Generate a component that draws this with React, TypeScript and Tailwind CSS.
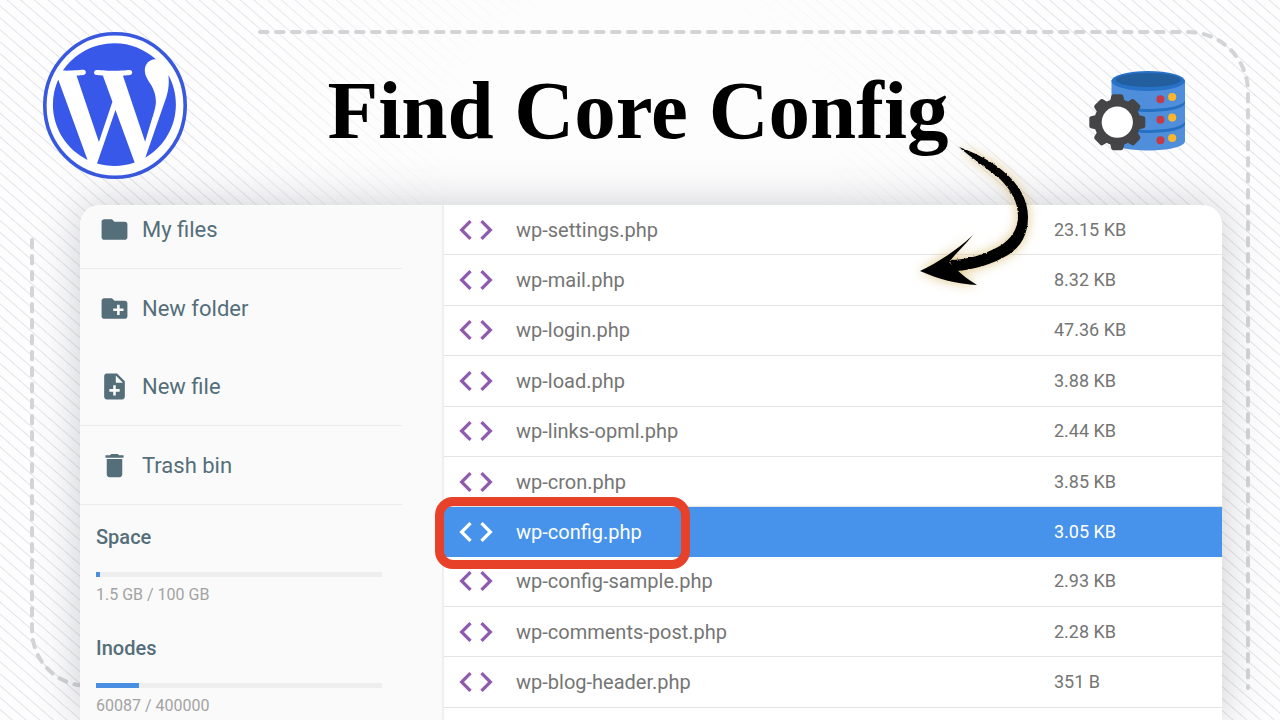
import type { IconType } from "react-icons";
import { MdCode, MdCreateNewFolder, MdDelete, MdFolder, MdNoteAdd } from "react-icons/md";

type FileEntry = { name: string; size: string; selected?: boolean };

const files: FileEntry[] = [
  { name: "wp-settings.php", size: "23.15 KB" },
  { name: "wp-mail.php", size: "8.32 KB" },
  { name: "wp-login.php", size: "47.36 KB" },
  { name: "wp-load.php", size: "3.88 KB" },
  { name: "wp-links-opml.php", size: "2.44 KB" },
  { name: "wp-cron.php", size: "3.85 KB" },
  { name: "wp-config.php", size: "3.05 KB", selected: true },
  { name: "wp-config-sample.php", size: "2.93 KB" },
  { name: "wp-comments-post.php", size: "2.28 KB" },
  { name: "wp-blog-header.php", size: "351 B" },
];

function WordPressLogo() {
  return (
    <svg viewBox="0 0 144 147" className="h-[147px] w-36 shrink-0" role="img" aria-label="WordPress">
      <ellipse cx="72" cy="73.5" rx="70.2" ry="71.7" fill="#fff" stroke="#3858e0" strokeWidth="3.6" />
      <g transform="translate(3 4.2) scale(5.7)" fill="#3858e9">
        <path d="M21.469 6.825c.84 1.537 1.318 3.3 1.318 5.175 0 3.979-2.156 7.456-5.363 9.325l3.295-9.527c.615-1.54.82-2.771.82-3.864 0-.405-.026-.78-.07-1.11m-7.981.105c.647-.03 1.232-.105 1.232-.105.582-.075.514-.93-.067-.899 0 0-1.755.135-2.88.135-1.064 0-2.85-.15-2.85-.15-.585-.03-.661.855-.075.885 0 0 .54.061 1.125.09l1.68 4.605-2.37 7.08L5.354 6.9c.649-.03 1.234-.1 1.234-.1.585-.075.516-.93-.065-.896 0 0-1.746.138-2.874.138-.2 0-.438-.008-.69-.015C4.911 3.15 8.235 1.215 12 1.215c2.809 0 5.365 1.072 7.286 2.833-.046-.003-.091-.009-.141-.009-1.06 0-1.812.923-1.812 1.914 0 .89.513 1.643 1.06 2.531.411.72.89 1.643.89 2.977 0 .915-.354 1.994-.821 3.479l-1.075 3.585-3.9-11.61.001.014zM12 22.784c-1.059 0-2.081-.153-3.048-.437l3.237-9.406 3.315 9.087c.024.053.05.101.078.149-1.12.393-2.325.609-3.582.609M1.211 12c0-1.564.336-3.05.935-4.39L7.29 21.709C3.694 19.96 1.212 16.271 1.211 12" />
      </g>
    </svg>
  );
}

function DatabaseIcon() {
  return (
    <svg viewBox="0 0 97 81" className="h-[81px] w-[97px] shrink-0" role="img" aria-label="Database settings">
      <path d="M22.5 10v61c0 5.500 16 9.500 36.700 9.500S96 76.500 96 71V10z" fill="#4f8edb" />
      <path d="M22.500 30c0 5 16 9 36.700 9S96 35 96 30v3c0 5-16 9-36.800 9s-36.700-4-36.700-9zM22.500 51c0 5 16 9 36.700 9S96 56 96 51v3c0 5-16 9-36.800 9s-36.700-4-36.700-9z" fill="#2670c4" />
      <ellipse cx="59.200" cy="11" rx="36.800" ry="10" fill="#2771c6" />
      <ellipse cx="59.200" cy="10" rx="32.500" ry="7" fill="#235f9f" />
      <g fill="#c53948">
        <circle cx="71.400" cy="29.200" r="4" />
        <circle cx="71.400" cy="49.800" r="4" />
        <circle cx="71.400" cy="70.200" r="4" />
      </g>
      <g fill="#fbb62c">
        <circle cx="83.200" cy="27" r="4.100" />
        <circle cx="83.200" cy="47.600" r="4.100" />
        <circle cx="83.200" cy="68" r="4.100" />
      </g>
      <g transform="translate(28.300 52.200)" fill="#454547">
        <circle r="23.200" />
        {[0, 45, 90, 135, 180, 225, 270, 315].map((angle) => (
          <path key={angle} transform={`rotate(${angle})`} d="M-7.500 -20L-6 -26.300Q-5.500 -28 -3.800 -28H3.800Q5.500 -28 6 -26.300L7.500 -20Z" />
        ))}
        <circle r="15.600" fill="#fff" />
      </g>
    </svg>
  );
}

function DashedFrame() {
  return (
    <svg
      viewBox="0 0 1280 720"
      className="pointer-events-none absolute inset-0 h-full w-full"
      fill="none"
      stroke="#d3d4d6"
      strokeWidth="4"
      strokeLinecap="round"
      strokeDasharray="7.500 8.500"
      aria-hidden="true"
    >
      <path d="M260 32H1188A60 60 0 0 1 1248 92V688" />
      <path d="M32 240V630A56 56 0 0 0 88 686" />
    </svg>
  );
}

function HandArrow() {
  return (
    <svg viewBox="900 130 150 170" className="pointer-events-none absolute top-[130px] left-[900px] h-[170px] w-[150px]" aria-hidden="true">
      <defs>
        <filter id="rough" x="-20%" y="-20%" width="140%" height="140%">
          <feTurbulence type="fractalNoise" baseFrequency="0.35" numOctaves="2" seed="4" result="noise" />
          <feDisplacementMap in="SourceGraphic" in2="noise" scale="2.5" xChannelSelector="R" yChannelSelector="G" />
        </filter>
      </defs>
      <g className="drop-shadow-[0_0_6px_rgba(214,180,100,0.8)]">
        <path
          filter="url(#rough)"
          d="M959 147C975 153 990 160 1003 171C1019 184 1028 200 1028 217C1028 234 1021 247 1008 255C992 264 975 270 955 271L949 260C968 260 985 254 998 247C1011 240 1018 229 1018 216C1018 202 1011 190 1000 179C988 169 973 159 959 147Z"
        />
        <path d="M920 271C939 262 957 250 973 235C966 244 956 253 949 262L956 269C962 275 969 280 977 285C957 284 938 279 920 271Z" />
      </g>
    </svg>
  );
}

function NavItem({ icon: Icon, label }: { icon: IconType; label: string }) {
  return (
    <li>
      <a href="#" className="flex h-[78px] items-center gap-3 pl-[19px]">
        <Icon size={31} />
        <span>{label}</span>
      </a>
    </li>
  );
}

function Usage({ title, percent, detail }: { title: string; percent: number; detail: string }) {
  return (
    <section className="pr-[60px] pl-4">
      <h2 className="text-xl leading-6 font-medium text-[#546e7a]">{title}</h2>
      <div className="mt-[23px] h-[5px] bg-[#eeeeee]">
        <div className="h-full bg-[#4a90e2]" style={{ width: `${percent}%` }} />
      </div>
      <p className="mt-2 text-base leading-5 text-[#a3a3a3]">{detail}</p>
    </section>
  );
}

function Sidebar() {
  return (
    <aside className="w-[364px] shrink-0 border-r-2 border-[#efefef] bg-[#fafafa]">
      <nav className="mr-10 text-[22px] text-[#546e7a]">
        <ul className="-mt-[15px] border-b border-[#ececec]">
          <NavItem icon={MdFolder} label="My files" />
        </ul>
        <ul className="border-b border-[#ececec]">
          <NavItem icon={MdCreateNewFolder} label="New folder" />
          <NavItem icon={MdNoteAdd} label="New file" />
        </ul>
        <ul className="border-b border-[#ececec]">
          <NavItem icon={MdDelete} label="Trash bin" />
        </ul>
      </nav>
      <div className="flex flex-col gap-[31px] pt-5">
        <Usage title="Space" percent={1.5} detail="1.5 GB / 100 GB" />
        <Usage title="Inodes" percent={15} detail="60087 / 400000" />
      </div>
    </aside>
  );
}

function FileTable() {
  return (
    <div className="min-w-0 flex-1 bg-white">
      <table className="h-[503px] w-full table-fixed border-collapse">
        <tbody>
          {files.map((file) => (
            <tr
              key={file.name}
              className={
                file.selected
                  ? "bg-[#4793eb] text-white"
                  : "border-b border-[#e4e4e4] text-[#757575]"
              }
            >
              <th scope="row" className="relative p-0 pl-3 text-left text-xl font-normal">
                <span className="flex items-center gap-5">
                  <MdCode size={40} className={file.selected ? "text-white" : "text-[#8e5bb0]"} />
                  {file.name}
                </span>
                {file.selected && (
                  <span className="absolute -top-[10px] -left-[9px] z-10 h-[72px] w-[255px] rounded-[18px] border-[9px] border-[#e8412a]" />
                )}
              </th>
              <td className="w-[168px] p-0 text-lg">{file.size}</td>
            </tr>
          ))}
        </tbody>
      </table>
    </div>
  );
}

export default function App() {
  return (
    <main className="relative flex h-screen flex-col overflow-hidden bg-[repeating-linear-gradient(41deg,#fdfdfe_0px,#fdfdfe_7px,#e3e4ea_8px,#fdfdfe_9px)] font-[Roboto,sans-serif]">
      <div className="absolute inset-0 bg-[radial-gradient(ellipse_at_50%_22%,#fdfdfe_20%,transparent_48%)]" />
      <DashedFrame />
      <header className="relative flex h-[205px] shrink-0 items-start justify-between pr-[94px] pl-[43px]">
        <div className="pt-8">
          <WordPressLogo />
        </div>
        <h1 className="pt-[62px] font-['Liberation_Serif',serif] text-[83px] leading-[96px] font-bold text-black">
          Find Core Config
        </h1>
        <div className="pt-[70px]">
          <DatabaseIcon />
        </div>
      </header>
      <div className="relative mr-[58px] ml-20 flex flex-1 rounded-t-[20px] shadow-[0_0_44px_rgba(60,65,75,0.26)]">
        <div className="flex flex-1 overflow-clip rounded-t-[20px]">
          <Sidebar />
          <FileTable />
        </div>
      </div>
      <HandArrow />
    </main>
  );
}
